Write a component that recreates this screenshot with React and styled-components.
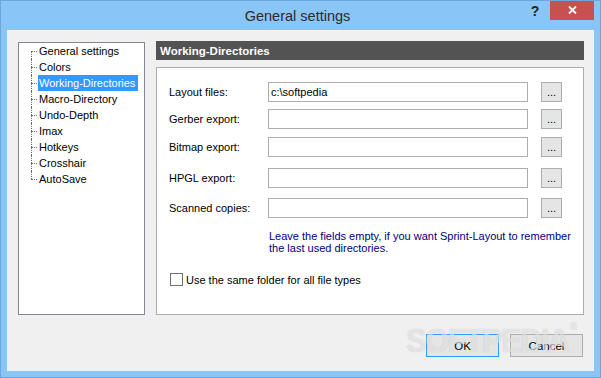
import React from "react";
import styled, { createGlobalStyle } from "styled-components";

const GlobalStyle = createGlobalStyle`
  html, body { margin: 0; padding: 0; background: #89c6f7; }
  * { box-sizing: border-box; }
`;

const Window = styled.div`
  position: relative;
  width: 601px;
  height: 378px;
  background: #89c6f7;
  border: 1px solid #6fa6da;
  display: flex;
  flex-direction: column;
  overflow: hidden;
  font-family: "Liberation Sans", Arial, sans-serif;
  font-size: 11px;
  color: #000;
`;

const TitleBar = styled.div`
  height: 29px;
  display: grid;
  grid-template-columns: 1fr auto 1fr;
  padding-right: 6px;
`;

const Title = styled.div`
  grid-column: 2;
  font-size: 14.5px;
  color: #2b2b2b;
  padding-top: 7px;
  line-height: 17px;
`;

const Controls = styled.div`
  grid-column: 3;
  display: flex;
  justify-content: flex-end;
  align-items: flex-start;
`;

const HelpButton = styled.div`
  width: 30px;
  height: 20px;
  display: flex;
  align-items: center;
  justify-content: center;
  font-weight: bold;
  font-size: 14px;
  color: #222;
`;

const CloseButton = styled.div`
  width: 44px;
  height: 20px;
  margin-top: -1px;
  background: #c75050;
  display: flex;
  align-items: center;
  justify-content: center;
`;

const Client = styled.div`
  flex: 1;
  margin: 0 6px 6px 6px;
  background: #f0f0f0;
  padding: 11px 10px 13px 11px;
  display: flex;
  flex-direction: column;
`;

const TopRow = styled.div`
  display: flex;
  align-items: flex-start;
  gap: 11px;
`;

const Tree = styled.div`
  width: 127px;
  height: 273px;
  margin-top: 1px;
  background: #fff;
  border: 1px solid #828790;
`;

const TreeItem = styled.div`
  position: relative;
  height: 16px;
  padding-left: 19px;
  display: flex;
  align-items: center;

  &::before {
    content: "";
    position: absolute;
    left: 12px;
    top: 8px;
    width: 6px;
    border-top: 1px dotted #6a6a6a;
  }

  &::after {
    content: "";
    position: absolute;
    left: 12px;
    top: ${(p) => (p.$first ? "8px" : "0")};
    height: ${(p) => (p.$first || p.$last ? "8px" : "16px")};
    border-left: 1px dotted #6a6a6a;
  }
`;

const TreeLabel = styled.span`
  display: inline-block;
  height: 16px;
  line-height: 16px;
  padding: 0 3px 0 1px;
  background: ${(p) => (p.$selected ? "#3399ff" : "transparent")};
  color: ${(p) => (p.$selected ? "#fff" : "#000")};
  white-space: nowrap;
`;

const Panel = styled.div`
  flex: 1;
  display: flex;
  flex-direction: column;
  gap: 7px;
`;

const PanelHeader = styled.div`
  height: 19px;
  background: #535353;
  color: #fff;
  font-weight: bold;
  font-size: 11.5px;
  padding-left: 4px;
  display: flex;
  align-items: center;
`;

const Group = styled.div`
  height: 248px;
  background: #fff;
  border: 1px solid #adadad;
  padding: 14px 0 0 12px;
  display: flex;
  flex-direction: column;
`;

const FieldRow = styled.div`
  display: flex;
  align-items: center;
  height: 20px;
  margin-top: ${(p) => p.$gap}px;
`;

const FieldLabel = styled.div`
  width: 99px;
  white-space: nowrap;
`;

const TextInput = styled.div`
  width: 260px;
  height: 20px;
  border: 1px solid #abadb3;
  background: #fff;
  padding-left: 2px;
  display: flex;
  align-items: center;
  white-space: nowrap;
`;

const BrowseButton = styled.div`
  width: 21px;
  height: 20px;
  margin-left: 13px;
  background: #e5e5e5;
  border: 1px solid #adadad;
  display: flex;
  align-items: flex-end;
  justify-content: center;
  padding-bottom: 3px;
  line-height: 11px;
  font-size: 11px;
`;

const Note = styled.div`
  margin-top: 12px;
  margin-left: 100px;
  color: #000080;
  line-height: 12px;
  white-space: nowrap;
`;

const CheckRow = styled.label`
  display: flex;
  align-items: center;
  gap: 3px;
  margin-top: 19px;
  margin-left: 1px;
`;

const CheckBox = styled.span`
  width: 13px;
  height: 13px;
  border: 1px solid #707070;
  background: #fff;
`;

const Footer = styled.div`
  margin-top: 19px;
  padding-right: 1px;
  display: flex;
  justify-content: flex-end;
  gap: 11px;
`;

const DialogButton = styled.div`
  width: 73px;
  height: 23px;
  background: #e5e5e5;
  border: 1px solid ${(p) => (p.$default ? "#3399ff" : "#adadad")};
  display: flex;
  align-items: center;
  justify-content: center;
  font-size: 11.5px;
`;

const Watermark = styled.div`
  position: absolute;
  left: 405px;
  top: 320px;
  font-family: "Liberation Sans", Arial, sans-serif;
  font-weight: bold;
  font-size: 34px;
  letter-spacing: -2px;
  transform: scaleX(0.92);
  transform-origin: left top;
  color: rgba(255, 255, 255, 0.6);
  text-shadow: 0 0 1px rgba(0, 0, 0, 0.22);
  pointer-events: none;
  white-space: nowrap;

  sup {
    font-size: 10px;
    letter-spacing: 0;
    vertical-align: top;
    margin-left: 2px;
  }
`;

const treeItems = [
  "General settings",
  "Colors",
  "Working-Directories",
  "Macro-Directory",
  "Undo-Depth",
  "Imax",
  "Hotkeys",
  "Crosshair",
  "AutoSave",
];

const fields = [
  { label: "Layout files:", value: "c:\\softpedia", gap: 0 },
  { label: "Gerber export:", value: "", gap: 7 },
  { label: "Bitmap export:", value: "", gap: 8 },
  { label: "HPGL export:", value: "", gap: 11 },
  { label: "Scanned copies:", value: "", gap: 10 },
];

export default function App() {
  return (
    <>
      <GlobalStyle />
      <Window>
        <TitleBar>
          <Title>General settings</Title>
          <Controls>
            <HelpButton>?</HelpButton>
            <CloseButton>
              <svg width="9" height="8" viewBox="0 0 9 8">
                <path d="M1 0.5 L8 7.5 M8 0.5 L1 7.5" stroke="#fff" strokeWidth="1.8" />
              </svg>
            </CloseButton>
          </Controls>
        </TitleBar>
        <Client>
          <TopRow>
            <Tree>
              {treeItems.map((t, i) => (
                <TreeItem key={t} $first={i === 0} $last={i === treeItems.length - 1}>
                  <TreeLabel $selected={t === "Working-Directories"}>{t}</TreeLabel>
                </TreeItem>
              ))}
            </Tree>
            <Panel>
              <PanelHeader>Working-Directories</PanelHeader>
              <Group>
                {fields.map((f) => (
                  <FieldRow key={f.label} $gap={f.gap}>
                    <FieldLabel>{f.label}</FieldLabel>
                    <TextInput>{f.value}</TextInput>
                    <BrowseButton>...</BrowseButton>
                  </FieldRow>
                ))}
                <Note>
                  Leave the fields empty, if you want Sprint-Layout to remember
                  <br />
                  the last used directories.
                </Note>
                <CheckRow>
                  <CheckBox />
                  <span>Use the same folder for all file types</span>
                </CheckRow>
              </Group>
            </Panel>
          </TopRow>
          <Footer>
            <DialogButton $default>OK</DialogButton>
            <DialogButton>Cancel</DialogButton>
          </Footer>
        </Client>
        <Watermark>
          SOFTPEDIA<sup>®</sup>
        </Watermark>
      </Window>
    </>
  );
}
